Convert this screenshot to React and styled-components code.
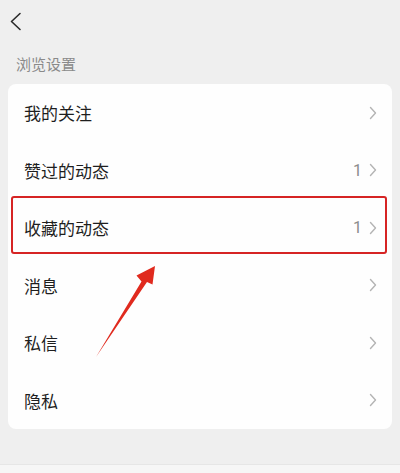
import React from 'react'
import styled, { createGlobalStyle } from 'styled-components'

const GlobalStyle = createGlobalStyle`
	html, body {
		margin: 0;
		padding: 0;
		background: #efefef;
	}
	body {
		font-family: "Noto Sans CJK SC", "Noto Sans", sans-serif;
	}
`

const PageX = styled.div`
	position: relative;
	width: 400px;
	height: 473px;
	overflow: hidden;
	background: #efefef;
	display: flex;
	flex-direction: column;
`

const HeaderX = styled.div`
	height: 42px;
	display: flex;
	align-items: center;
	padding-left: 7px;
`

const BackX = styled.button`
	border: 0;
	background: none;
	padding: 0;
	width: 16px;
	height: 20px;
	display: flex;
	align-items: center;
	justify-content: center;
	color: #333;
`

const SectionX = styled.p`
	margin: 0;
	height: 42px;
	padding-left: 16px;
	display: flex;
	align-items: center;
	font-size: 15px;
	color: #8a8a8a;
`

const CardX = styled.ul`
	list-style: none;
	margin: 0 8px;
	padding: 0;
	background: #fefefe;
	border-radius: 8px;
`

const RowX = styled.li`
	height: 57.5px;
	display: flex;
	align-items: center;
	padding: 0 15px 0 16px;
	font-size: 17px;
	color: #1e1e1e;
`

const LabelX = styled.span`
	flex: 1;
`

const CountX = styled.span`
	font-family: "Roboto", "Noto Sans", sans-serif;
	font-size: 16px;
	color: #8c8c8c;
	margin-right: 7px;
`

const ChevronX = styled.svg`
	width: 8px;
	height: 14px;
`

const FooterX = styled.div`
	margin-top: auto;
	height: 8px;
	background: #f6f6f6;
	border-top: 1px solid #e6e6e6;
`

const HighlightX = styled.div`
	position: absolute;
	left: 11px;
	top: 196px;
	width: 376px;
	height: 58px;
	border: 2px solid #d62424;
	border-radius: 3px;
	box-sizing: border-box;
`

const ArrowX = styled.svg`
	position: absolute;
	left: 0;
	top: 0;
	width: 400px;
	height: 473px;
	pointer-events: none;
`

const items = [
	{ name: '我的关注' },
	{ name: '赞过的动态', count: 1 },
	{ name: '收藏的动态', count: 1 },
	{ name: '消息' },
	{ name: '私信' },
	{ name: '隐私' }
]

const Chevron = () => (
	<ChevronX viewBox="0 0 8 14">
		<path d="M1.5 1.5 L6.5 7 L1.5 12.5" fill="none" stroke="#b4b4b4" strokeWidth="1.4" strokeLinecap="round" strokeLinejoin="round" />
	</ChevronX>
)

const App = () => (
	<PageX>
		<GlobalStyle />
		<HeaderX>
			<BackX aria-label="back">
				<svg width="13" height="19" viewBox="0 0 13 19">
					<path d="M11 1.5 L2.5 9.5 L11 17.5" fill="none" stroke="#2a2a2a" strokeWidth="1.6" strokeLinecap="round" strokeLinejoin="round" />
				</svg>
			</BackX>
		</HeaderX>

		<SectionX>浏览设置</SectionX>

		<CardX>
			{items.map( item => (
				<RowX key={item.name}>
					<LabelX>{item.name}</LabelX>
					{item.count && ( <CountX>{item.count}</CountX> )}
					<Chevron />
				</RowX>
			) )}
		</CardX>

		<FooterX />

		<HighlightX />

		<ArrowX viewBox="0 0 400 473">
			<path d="M96 357 L141.5 281.5 L136.5 275.5 L155 266 L152.5 284.5 L147 282 Z" fill="#e02a1e" />
		</ArrowX>
	</PageX>
)

export default App
